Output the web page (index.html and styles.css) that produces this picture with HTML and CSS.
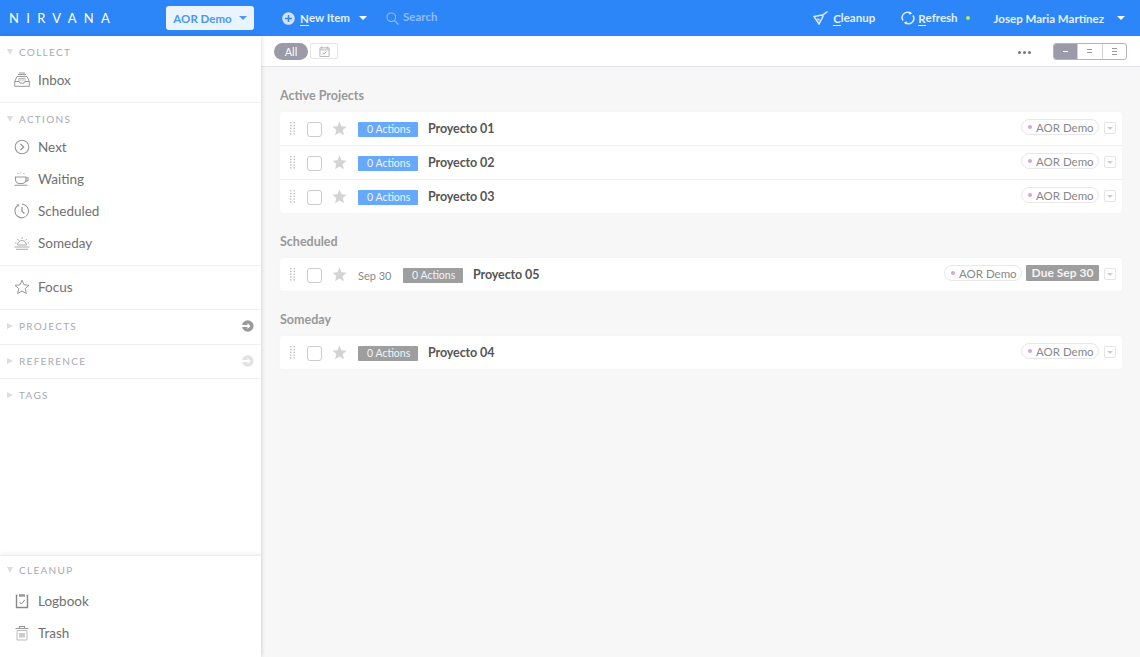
FILE: index.html
```html
<!DOCTYPE html>
<html lang="en">
<head>
<meta charset="utf-8">
<title>Nirvana</title>
<link rel="stylesheet" href="styles.css">
</head>
<body>
<svg class="defs" width="0" height="0" aria-hidden="true">
  <symbol id="star" viewBox="0 0 16 16"><path d="M8 .6l2.200 5 5.400 .5-4.100 3.600 1.200 5.400L8 12.300l-4.700 2.800 1.200-5.400L.4 6.100l5.400-.5z" fill="currentColor"/></symbol>
  <symbol id="grip" viewBox="0 0 6 13"><g fill="currentColor"><rect x="0" y="0" width="1.400" height="1.400"/><rect x="3.600" y="0" width="1.400" height="1.400"/><rect x="0" y="2.800" width="1.400" height="1.400"/><rect x="3.600" y="2.800" width="1.400" height="1.400"/><rect x="0" y="5.600" width="1.400" height="1.400"/><rect x="3.600" y="5.600" width="1.400" height="1.400"/><rect x="0" y="8.400" width="1.400" height="1.400"/><rect x="3.600" y="8.400" width="1.400" height="1.400"/><rect x="0" y="11.200" width="1.400" height="1.400"/><rect x="3.600" y="11.200" width="1.400" height="1.400"/></g></symbol>
  <symbol id="go" viewBox="0 0 13 12"><circle cx="6.800" cy="6" r="5.800" fill="currentColor"/><path d="M0 5h6.500V3l3 3-3 3V7H0z" fill="#fff"/></symbol>
</svg>

<header class="topbar">
  <div class="brand-area">
    <span class="logo">NIRVANA</span>
    <button class="aor-btn">AOR Demo <span class="caret caret-blue"></span></button>
  </div>
  <div class="top-main">
    <div class="top-item new-item">
      <svg class="ico-new" viewBox="0 0 13 13"><circle cx="6.500" cy="6.500" r="6.300" fill="#cfe3fd"/><path d="M6.500 3v7M3 6.500h7" stroke="#2d86f7" stroke-width="1.500"/></svg>
      <span class="u-first">N</span><span class="after-u">ew Item</span>
      <span class="caret caret-white new-caret"></span>
    </div>
    <div class="search">
      <svg class="ico-search" viewBox="0 0 13 13"><circle cx="5.300" cy="5.300" r="4.300" fill="none" stroke="#8fbdf9" stroke-width="1.100"/><path d="M8.500 8.500l4 4" stroke="#8fbdf9" stroke-width="1.100"/></svg>
      <span>Search</span>
    </div>
    <div class="top-right">
      <div class="top-item cleanup">
        <svg class="ico-clean" viewBox="0 0 15 14"><path d="M14.500 .5L8.800 4.800M1 5.500l8-1.500 .9 1.500L6 13z" fill="none" stroke="#dcebfe" stroke-width="1.500"/><path d="M4.500 7.500l2 2" stroke="#dcebfe" stroke-width="1.200"/></svg>
        <span class="u-first">C</span><span class="after-u">leanup</span>
      </div>
      <div class="top-item refresh">
        <svg class="ico-refresh" viewBox="0 0 14 14"><path d="M2.100 9.500A5.200 5.200 0 0 1 9.500 2.400M11.900 4.500A5.200 5.200 0 0 1 4.500 11.600" fill="none" stroke="#dcebfe" stroke-width="1.500"/><path d="M8.600 .2l2.600 2.300-3 1.200zM5.400 13.800l-2.600-2.300 3-1.200z" fill="#dcebfe"/></svg>
        <span class="u-first">R</span><span class="after-u">efresh</span>
        <span class="dot-green"></span>
      </div>
      <div class="top-item user">Josep Maria Martínez <span class="caret caret-white user-caret"></span></div>
    </div>
  </div>
</header>

<div class="body-row">
  <aside class="sidebar">
    <div class="side-top">
      <section class="side-sec">
        <h3 class="side-label"><span class="tri-down"></span>COLLECT</h3>
        <div class="side-row">
          <svg class="side-ico" viewBox="0 0 16 16"><path d="M.7 9.500L3 4.500h10l2.300 5v4.800H.7zM.7 9.500h4.500l.8 1.600h4l.8-1.600h4.500M4 2.500h8M5 1h6" fill="none" stroke="#999" stroke-width="1"/><path d="M4.500 6.500h7M4 8h8" stroke="#bbb"/></svg>
          Inbox
        </div>
      </section>
      <section class="side-sec">
        <h3 class="side-label"><span class="tri-down"></span>ACTIONS</h3>
        <div class="side-row">
          <svg class="side-ico" viewBox="0 0 16 16"><circle cx="8" cy="8" r="6.800" fill="none" stroke="#999" stroke-width="1.100"/><path d="M6.500 4.800L9.700 8l-3.200 3.200" fill="none" stroke="#888" stroke-width="1.100"/></svg>
          Next
        </div>
        <div class="side-row">
          <svg class="side-ico" viewBox="0 0 16 16"><path d="M1.500 6h10.500v2.500c0 2.500-2 4-4 4H5.500c-2 0-4-1.500-4-4zM12 6.800h2v2.500l-2.500 1.200M.5 14.300h13" fill="none" stroke="#999" stroke-width="1.100"/><path d="M4 2v2M7 1.500v2M10 2v2" stroke="#aaa" stroke-dasharray="1 1"/></svg>
          Waiting
        </div>
        <div class="side-row">
          <svg class="side-ico" viewBox="0 0 16 16"><path d="M4 2.300A6.800 6.800 0 1 0 8 1.200" fill="none" stroke="#999" stroke-width="1.100"/><path d="M8 4v4.500l2.500 2" fill="none" stroke="#888" stroke-width="1.100"/><path d="M2.200 1.200h3v3z" fill="#aaa"/></svg>
          Scheduled
        </div>
        <div class="side-row">
          <svg class="side-ico" viewBox="0 0 16 16"><path d="M3.500 10a4.500 4.500 0 0 1 9 0zM.5 12h15M2 14.300h12" fill="none" stroke="#aaa" stroke-width="1"/><path d="M8 2v2M3.300 4l1.300 1.500M12.700 4l-1.300 1.500M1 8h1.500M13.500 8H15" stroke="#aaa"/></svg>
          Someday
        </div>
      </section>
      <section class="side-sec side-focus">
        <div class="side-row">
          <svg class="side-ico" viewBox="0 0 16 16"><path d="M8 1.200l2 4.600 5 .5-3.800 3.300 1.200 4.900L8 12l-4.400 2.500 1.200-4.900L1 6.300l5-.5z" fill="none" stroke="#999" stroke-width="1"/></svg>
          Focus
        </div>
      </section>
      <section class="side-sec side-collapsed">
        <h3 class="side-label"><span class="tri-right"></span>PROJECTS<svg class="go go-dark"><use href="#go"/></svg></h3>
      </section>
      <section class="side-sec side-collapsed">
        <h3 class="side-label"><span class="tri-right"></span>REFERENCE<svg class="go go-light"><use href="#go"/></svg></h3>
      </section>
      <section class="side-sec side-collapsed no-border">
        <h3 class="side-label"><span class="tri-right"></span>TAGS</h3>
      </section>
    </div>
    <div class="side-bottom">
      <h3 class="side-label"><span class="tri-down"></span>CLEANUP</h3>
      <div class="side-row">
        <svg class="side-ico" viewBox="0 0 16 16"><path d="M3.500 2.500h-1v12h11v-12h-1" fill="none" stroke="#888" stroke-width="1.400"/><path d="M5 1.200h6v2.500H5z" fill="#999"/><path d="M5.500 9l2 2 3.200-4" fill="none" stroke="#888" stroke-width="1"/></svg>
        Logbook
      </div>
      <div class="side-row">
        <svg class="side-ico" viewBox="0 0 16 16"><path d="M1.500 3.500h13M5.500 3V1.500h5V3" fill="none" stroke="#999" stroke-width="1.200"/><path d="M3 5.500h10v9.500H3z" fill="none" stroke="#bbb"/><path d="M6 8v4.500M8 8v4.500M10 8v4.500" stroke="#999"/></svg>
        Trash
      </div>
    </div>
  </aside>

  <main class="main">
    <div class="toolbar">
      <span class="pill-all">All</span>
      <span class="cal-btn">
        <svg viewBox="0 0 12 12" class="ico-cal"><path d="M1 2h10v9.500H1zM3 .5v2.500M9 .5v2.500M1 4.200h10" fill="none" stroke="#aaa" stroke-width=".9"/><path d="M4 7.500l1.500 1.500 2.500-3" fill="none" stroke="#999" stroke-width=".9"/></svg>
      </span>
      <span class="dots"><i></i><i></i><i></i></span>
      <div class="segs">
        <span class="seg seg-on"><i class="bar bar-w"></i></span>
        <span class="seg"><i class="bar"></i><i class="bar"></i></span>
        <span class="seg"><i class="bar"></i><i class="bar"></i><i class="bar"></i></span>
      </div>
    </div>

    <div class="content">
      <h2 class="group-title first">Active Projects</h2>
      <div class="card">
        <div class="row">
          <svg class="grip"><use href="#grip"/></svg><span class="check"></span><svg class="star"><use href="#star"/></svg>
          <span class="badge badge-blue">0 Actions</span><span class="name">Proyecto 01</span>
          <span class="tag">AOR Demo</span><span class="menu"></span>
        </div>
        <div class="row">
          <svg class="grip"><use href="#grip"/></svg><span class="check"></span><svg class="star"><use href="#star"/></svg>
          <span class="badge badge-blue">0 Actions</span><span class="name">Proyecto 02</span>
          <span class="tag">AOR Demo</span><span class="menu"></span>
        </div>
        <div class="row">
          <svg class="grip"><use href="#grip"/></svg><span class="check"></span><svg class="star"><use href="#star"/></svg>
          <span class="badge badge-blue">0 Actions</span><span class="name">Proyecto 03</span>
          <span class="tag">AOR Demo</span><span class="menu"></span>
        </div>
      </div>

      <h2 class="group-title">Scheduled</h2>
      <div class="card">
        <div class="row">
          <svg class="grip"><use href="#grip"/></svg><span class="check"></span><svg class="star"><use href="#star"/></svg>
          <span class="date">Sep 30</span>
          <span class="badge badge-gray">0 Actions</span><span class="name">Proyecto 05</span>
          <span class="tag">AOR Demo</span><span class="due">Due Sep 30</span><span class="menu"></span>
        </div>
      </div>

      <h2 class="group-title">Someday</h2>
      <div class="card">
        <div class="row">
          <svg class="grip"><use href="#grip"/></svg><span class="check"></span><svg class="star"><use href="#star"/></svg>
          <span class="badge badge-gray">0 Actions</span><span class="name">Proyecto 04</span>
          <span class="tag">AOR Demo</span><span class="menu"></span>
        </div>
      </div>
    </div>
  </main>
</div>
</body>
</html>
```

FILE: styles.css
```css
* { box-sizing: border-box; }
html, body { height: 100%; }
body {
  margin: 0;
  height: 657px;
  overflow: hidden;
  display: flex;
  flex-direction: column;
  font-family: "Lato", "Liberation Sans", sans-serif;
  font-size: 13px;
  color: #555;
  background: #f7f7f7;
}
.defs { position: absolute; }

/* top bar */
.topbar {
  height: 36px;
  flex: none;
  display: flex;
  background: #2d86f7;
  color: #e3effe;
  font-size: 11.500px;
  font-weight: 700;
}
.brand-area {
  width: 261px;
  flex: none;
  display: flex;
  align-items: center;
  padding-left: 9px;
}
.logo {
  width: 157px;
  font-size: 13px;
  font-weight: 400;
  letter-spacing: 7.300px;
  color: #fff;
}
.aor-btn {
  width: 88px;
  height: 24px;
  padding: 0;
  border: 0;
  border-radius: 3px;
  background: #eaf4ff;
  color: #4a97f8;
  font: 700 11.500px "Lato", "Liberation Sans", sans-serif;
  display: flex;
  align-items: center;
  justify-content: center;
  gap: 7px;
}
.caret {
  display: inline-block;
  width: 0;
  height: 0;
  border-left: 4px solid transparent;
  border-right: 4px solid transparent;
  border-top: 4px solid #fff;
}
.caret-blue { border-top-color: #4a97f8; }
.top-main {
  flex: 1;
  display: flex;
  align-items: center;
  padding-left: 21px;
}
.top-item { display: flex; align-items: center; white-space: nowrap; }
.u-first { border-bottom: 1px solid #e3effe; line-height: 13px; margin-top: 1px; }
.after-u { line-height: 14px; }
.ico-new { width: 13px; height: 13px; margin-right: 5px; }
.new-caret { margin-left: 9px; }
.new-item { width: 104px; }
.search {
  display: flex;
  align-items: center;
  gap: 4px;
  margin-top: -4px;
  color: #8fbdf9;
  font-size: 11.500px;
  font-weight: 700;
}
.ico-search { width: 13px; height: 13px; margin-top: 4px; }
.top-right { margin-left: auto; display: flex; align-items: center; padding-right: 15px; }
.ico-clean { width: 15px; height: 14px; margin-right: 5px; }
.cleanup { margin-right: 26px; }
.ico-refresh { width: 14px; height: 14px; margin-right: 3px; }
.refresh { margin-right: 24px; }
.dot-green { width: 4px; height: 4px; border-radius: 50%; background: #b5f03c; margin-left: 8px; }
.user-caret { margin-left: 13px; }

/* body */
.body-row { flex: 1; display: flex; min-height: 0; }
.sidebar {
  width: 261px;
  flex: none;
  display: flex;
  flex-direction: column;
  justify-content: space-between;
  background: #fff;
  box-shadow: 1px 0 4px rgba(0, 0, 0, .12);
  position: relative;
  z-index: 1;
  color: #707070;
}
.side-sec { padding: 8px 0 6px; border-bottom: 1px solid #f0f0f0; }
.side-focus { padding-top: 5px; }
.side-collapsed { padding: 8px 0 9.500px; }
.no-border { border-bottom: 0; }
.side-label {
  margin: 0 0 4px;
  height: 16px;
  display: flex;
  align-items: center;
  padding: 0 7px;
  font-size: 10px;
  font-weight: 400;
  letter-spacing: 1.300px;
  color: #a9a9b2;
}
.side-collapsed .side-label { margin-bottom: 0; }
.tri-down, .tri-right { display: inline-block; width: 0; height: 0; margin-right: 6px; }
.tri-down { border-left: 3px solid transparent; border-right: 3px solid transparent; border-top: 6px solid #ddd; }
.tri-right { border-top: 3px solid transparent; border-bottom: 3px solid transparent; border-left: 6px solid #ddd; }
.go { width: 13px; height: 12px; margin-left: auto; }
.go-dark { color: #999; }
.go-light { color: #e2e2e2; }
.side-row {
  height: 32px;
  display: flex;
  align-items: center;
  padding-left: 14px;
  font-size: 13.500px;
}
.side-ico { width: 16px; height: 16px; margin-right: 8px; flex: none; }
.side-bottom {
  height: 102px;
  border-top: 1px solid #eee;
  padding-top: 6px;
  box-shadow: 0 -2px 3px rgba(0, 0, 0, .05);
}
.side-bottom .side-label { margin-bottom: 7px; }

/* main */
.main { flex: 1; min-width: 0; display: flex; flex-direction: column; }
.toolbar {
  height: 31px;
  flex: none;
  display: flex;
  align-items: center;
  padding: 0 13px;
  background: #fff;
  border-bottom: 1px solid #e4e4ec;
}
.pill-all {
  width: 34px;
  height: 17px;
  border-radius: 9px;
  background: #9a9aa8;
  color: #fff;
  font-size: 11px;
  text-align: center;
  line-height: 17px;
}
.cal-btn {
  width: 28px;
  height: 16px;
  margin-left: 2px;
  border: 1px solid #e6e6e6;
  border-radius: 2px;
  display: flex;
  align-items: center;
  justify-content: center;
}
.ico-cal { width: 11px; height: 11px; }
.dots { margin-left: auto; margin-top: 2px; display: flex; gap: 2px; }
.dots i { width: 3px; height: 3px; border-radius: 50%; background: #777; }
.segs {
  margin-left: 22px;
  width: 74px;
  height: 17px;
  display: flex;
  border: 1px solid #b3b3bd;
  border-radius: 3px;
  overflow: hidden;
}
.seg {
  flex: 1;
  display: flex;
  flex-direction: column;
  align-items: center;
  justify-content: center;
  gap: 2px;
  border-left: 1px solid #d0d0d8;
}
.seg-on { background: #9a9aa8; border-left: 0; }
.bar { width: 5px; height: 1px; background: #999; }
.bar-w { background: #fff; }

.content { padding: 0 18px 0 19px; }
.group-title {
  margin: 0 0 8px;
  padding-top: 21px;
  height: 37px;
  font-size: 12.500px;
  font-weight: 700;
  line-height: 16px;
  color: #999;
}
.group-title.first { padding-top: 21px; height: 45px; margin-bottom: 0; }
.card {
  background: #fff;
  border-radius: 2px;
  box-shadow: 0 0 1px rgba(0, 0, 0, .08);
}
.row {
  height: 34px;
  display: flex;
  align-items: center;
  padding: 0 6px 0 10px;
  border-bottom: 1px solid #f0f0f0;
}
.row:last-child { height: 33px; border-bottom: 0; }
.grip { width: 6px; height: 13px; color: #c0c0c0; flex: none; }
.check {
  width: 15px;
  height: 15px;
  margin: 1px 0 0 11px;
  border: 1px solid #ccc;
  border-radius: 3px;
  flex: none;
}
.star { width: 15px; height: 15px; margin: 0 0 0 10px; color: #d4d4d4; flex: none; }
.badge {
  height: 15px;
  margin-left: 11px;
  padding: 0 9px;
  width: 60px;
  border-radius: 1px;
  color: #eef5ff;
  font-size: 10.500px;
  line-height: 15px;
  text-align: center;
  white-space: nowrap;
  margin-top: 1px;
}
.badge-blue { background: #66a9fb; }
.badge-gray { background: #9e9e9e; }
.date { margin-left: 11px; width: 45px; font-size: 11px; color: #888; margin-top: 1px; }
.date + .badge { margin-left: 0; }
.name {
  margin-left: 10px;
  margin-top: -1px;
  font-weight: 700;
  font-size: 12.500px;
  letter-spacing: -.1px;
  color: #555;
}
.tag {
  margin-left: auto;
  width: 78px;
  height: 16px;
  margin-top: -3px;
  padding-left: 14px;
  border: 1px solid #e8e8e8;
  border-radius: 8px;
  color: #888;
  font-size: 11.500px;
  line-height: 15px;
  white-space: nowrap;
  position: relative;
}
.tag::before {
  content: "";
  position: absolute;
  left: 6px;
  top: 5px;
  width: 4px;
  height: 4px;
  border-radius: 50%;
  background: #dd9fe8;
}
.due {
  margin: -3px 0 0 4px;
  width: 73px;
  height: 16px;
  border-radius: 1px;
  background: #9e9e9e;
  color: #f3f3f3;
  font-size: 12px;
  font-weight: 700;
  line-height: 16px;
  text-align: center;
  white-space: nowrap;
}
.menu {
  margin: -1px 0 0 5px;
  width: 12px;
  height: 12px;
  border: 1px solid #e4e4e4;
  border-radius: 2px;
  display: flex;
  align-items: center;
  justify-content: center;
  flex: none;
}
.menu::before {
  content: "";
  border-left: 3px solid transparent;
  border-right: 3px solid transparent;
  border-top: 3px solid #ccc;
}
```
